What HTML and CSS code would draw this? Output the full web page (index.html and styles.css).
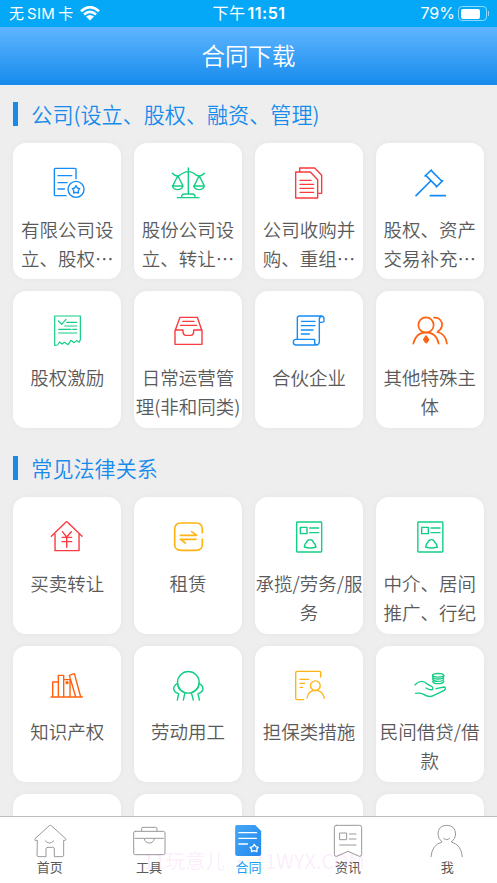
FILE: index.html
```
<!DOCTYPE html>
<html lang="zh-CN">
<head>
<meta charset="utf-8">
<title>合同下载</title>
<link rel="stylesheet" href="styles.css">
</head>
<body>
<div class="app">
  <header class="status">
    <div class="status-left"><span>无<span class="sim">SIM</span>卡</span>
      <svg class="wifi" viewBox="0 0 60 44"><path d="M3 15Q30-9 57 15M12 25Q30 9 48 25" fill="none" stroke="#fff" stroke-width="8"/><path d="M18 31Q30 22 42 31L30 43Z" fill="#fff"/></svg>
    </div>
    <div class="clock">下午<b>11:51</b></div>
    <div class="status-right"><span>79%</span><span class="battery"><i></i></span><span class="nub"></span></div>
  </header>
  <h1 class="title">合同下载</h1>
  <main class="content">
    <h2 class="section">公司(设立、股权、融资、管理)</h2>
    <div class="grid">
      <div class="card"><svg class="icon blue" viewBox="141.9 66 120 120"><path d="M199 167H167Q164 167 164 164V88Q164 85 167 85H226Q229 85 229 88V116M175 107H216M175 128H202M175 147H194"/><circle cx="229" cy="148" r="24"/><path d="M229 137L233 144L240 146L236 151V159L229 157L222 159V151L218 146L225 144Z"/></svg><p>有限公司设<br>立、股权…</p></div>
      <div class="card"><svg class="icon green" viewBox="504 66 120 120"><path d="M565 84V162M517 100Q525 109 534 108Q543 104 550 99Q565 91 580 99Q588 107 597 108Q606 108 613 100M533 108L519 136M534 108L548 136M597 108L583 136M598 108L612 136M517 138H549Q545 149 533 149Q521 149 517 138ZM581 138H613Q609 149 597 149Q585 149 581 138ZM532 173H597M545 172Q544 162 553 162H577Q586 162 585 172"/></svg><p>股份公司设<br>立、转让…</p></div>
      <div class="card"><svg class="icon red" viewBox="126 66 120 120"><path d="M146 96H190L212 119V174H146ZM158 95V84H203L224 106V160H213M159 121H192M159 133H200M159 145H200M159 157H200"/></svg><p>公司收购并<br>购、重组…</p></div>
      <div class="card"><svg class="icon blue thick" viewBox="488 66 120 120"><path d="M506 167L550 123M533 108L552 90M536 107L568 139M552 92L583 123M567 141L586 122M549 167H594"/></svg><p>股权、资产<br>交易补充…</p></div>

      <div class="card"><svg class="icon green thin" viewBox="141.9 61 120 120"><path d="M165 79H242V150L238 158L231 152L223 159L214 152L205 165L194 158L187 163L180 157L173 166L165 167ZM176 94L186 104L199 89M201 98H231M195 109H231M177 119H214M219 119H231M177 130H231"/></svg><p>股权激励</p></div>
      <div class="card"><svg class="icon red" viewBox="504 61 120 120"><path d="M525 121H549V127Q550 137 558 137H573Q580 137 581 127V121H606V164H525ZM526 121L540 83H592L605 121M548 95H582M541 107H590"/></svg><p>日常运营管<br>理(非和同类)</p></div>
      <div class="card"><svg class="icon blue" viewBox="126 61 120 120"><path d="M151 148V85Q151 79 158 79H222Q231 79 231 88V95Q230 98 225 98H218M224 79Q216 82 217 91V157Q216 166 207 166H147Q139 166 139 158Q139 149 147 149H203V157Q203 166 210 166M163 95H204M163 108H204M163 121H198M163 133H187"/></svg><p>合伙企业</p></div>
      <div class="card"><svg class="icon orange" viewBox="488 61 120 120"><g class="thick"><circle cx="536" cy="106" r="23"/><path d="M498 162Q506 128 536 128Q567 128 574 162M560 84Q572 82 579 91Q586 99 584 109Q582 119 570 127Q595 132 599 162"/></g><path class="fill" d="M536 139L544 150L540 156L537 159L533 156L529 150Z"/></svg><p>其他特殊主<br>体</p></div>
    </div>
    <h2 class="section second">常见法律关系</h2>
    <div class="grid">
      <div class="card"><svg class="icon red" viewBox="141.9 200 120 120"><path d="M155 261L199 218Q201 216 203 218L247 261M166 255V304H238V255M188 247L201 263L215 247M187 264H216M187 277H216M201 263V294"/></svg><p>买卖转让</p></div>
      <div class="card"><svg class="icon yellow thick" viewBox="504 200 120 120"><path d="M607 250V240Q607 221 588 221H543Q524 221 524 240V285Q524 303 543 303H588Q607 303 607 285V269M541 258H590L575 247M588 270H541L556 281"/></svg><p>租赁</p></div>
      <div class="card"><svg class="icon green" viewBox="126 80 120 120"><rect x="149" y="98" width="75" height="90" rx="2"/><path d="M160 114H180V133H160ZM188 116H215M188 130H215M172 173Q174 162 178 160Q181 151 189 151Q197 151 200 160Q205 163 207 173Q190 179 172 173Z"/></svg><p>承揽/劳务/服<br>务</p></div>
      <div class="card"><svg class="icon green" viewBox="488 80 120 120"><rect x="511.500" y="98" width="75" height="90" rx="2"/><path d="M523 114H543V133H523ZM551 116H578M551 130H578M535 173Q537 162 541 160Q544 151 552 151Q560 151 563 160Q568 163 570 173Q553 179 535 173Z"/></svg><p>中介、居间<br>推广、行纪</p></div>

      <div class="card"><svg class="icon orange" viewBox="141.9 75 120 120"><path d="M154 171H248M159 171V126H175M176 171V106H192V171M192 119H211V171M228 171L209 106L224 101L243 171"/><circle class="fill" cx="202" cy="128" r="3"/></svg><p>知识产权</p></div>
      <div class="card"><svg class="icon green" viewBox="504 75 120 120"><circle cx="565" cy="127" r="32.500"/><path d="M533 130Q521 137 521 146Q522 157 536 161L532 180M534 139Q537 151 555 158L550 180M597 130Q609 137 609 146Q608 157 594 161L598 180M596 139Q592 151 574 158L580 180"/></svg><p>劳动用工</p></div>
      <div class="card"><svg class="icon yellow" viewBox="126 75 120 120"><path d="M221 111V97Q221 94 218 94H151Q146 94 146 99V174Q146 179 151 179H170M159 118H185M159 130H173M159 142H167M180 174Q184 151 205 151Q227 151 232 174"/><circle cx="205" cy="137" r="14.500"/></svg><p>担保类措施</p></div>
      <div class="card"><svg class="icon green" viewBox="488 75 120 120"><path d="M503 134Q513 124 523 124Q533 124 538 131L547 136Q559 141 556 148Q550 152 536 144M505 160Q519 158 529 163Q546 174 558 167L591 151Q598 142 590 141L566 146"/><ellipse cx="572.500" cy="106" rx="16.500" ry="5.500"/><path d="M556 106V111Q558 117 572 117Q588 117 589 111V106M556 117Q558 124 572 124Q588 124 589 117M556 124Q558 131 572 131Q588 131 589 124"/></svg><p>民间借贷/借<br>款</p></div>

      <div class="card"></div><div class="card"></div><div class="card"></div><div class="card"></div>
    </div>
  </main>
  <nav class="tabs">
    <div class="tab"><svg viewBox="95 111 108 108"><path d="M110 166H104Q102 164 104 161L147 122Q150 120 153 122L196 161Q198 164 195 166H190V211Q190 215 186 215H162V192Q162 187 157 187H143Q137 187 137 192V215H113Q110 215 110 211ZM135 168Q147 181 160 168"/></svg><span>首页</span></div>
    <div class="tab"><svg viewBox="393 111 108 108"><rect x="401" y="139" width="94" height="70" rx="5"/><path d="M425 138V131Q425 127 429 127H467Q471 127 471 131V138M405 160H490M433 162Q435 174 448 174Q460 174 463 162"/></svg><span>工具</span></div>
    <div class="tab active"><svg viewBox="301.500 21 108 108"><defs><linearGradient id="doc" x1="0" y1="0" x2="1" y2="1"><stop offset="0" stop-color="#45a6f5"/><stop offset="1" stop-color="#2189ee"/></linearGradient></defs><path fill="url(#doc)" stroke="none" d="M322 30H377L395 48V117Q395 123 389 123H323Q317 123 317 117V35Q317 30 322 30Z"/><path class="lines" d="M328 53H381M328 70H381M328 87H354M374 88L379 95L386 97L382 102V110L374 107L366 110V102L362 97L370 95Z"/></svg><span>合同</span></div>
    <div class="tab"><svg viewBox="249 111 108 108"><path d="M268 121H338Q344 121 344 127V208Q343 215 337 214L303 199L269 214Q262 215 262 208V127Q262 121 268 121ZM279 144H299V164H279ZM307 147H327M307 162H327M278 180H327"/></svg><span>资讯</span></div>
    <div class="tab"><svg viewBox="547 111 108 108"><path d="M553 215Q556 179 586 171Q574 161 574 147Q575 121 600 121Q625 121 627 147Q627 161 614 171Q644 179 647 215M591 160Q600 169 609 160"/></svg><span>我</span></div>
    <div class="watermark">11玩意儿 · 11WYX.COM</div>
  </nav>
</div>
</body>
</html>
```
FILE: styles.css
```
* { box-sizing: border-box; }
body {
  margin: 0;
  background: #eee;
  color: #5a5a5a;
  font-family: "Noto Sans CJK SC", sans-serif;
  font-weight: 350;
}
h1, h2, p { margin: 0; font-weight: 350; }
.app {
  display: flex;
  flex-direction: column;
  height: 883px;
  overflow: hidden;
}
.status {
  flex: none;
  display: grid;
  grid-template-columns: 1fr auto 1fr;
  align-items: center;
  height: 27px;
  padding: 0 8px 0 9px;
  background: #04a8f7;
  color: #fff;
  font: 400 16px/27px Inter, "Noto Sans CJK SC", sans-serif;
}
.status-left, .status-right { display: flex; align-items: center; }
.status-left { gap: 7px; font-size: 15px; }
.sim { margin: 0 3px; letter-spacing: .3px; }
.wifi { width: 20px; height: 15px; }
.clock { letter-spacing: .5px; }
.clock b { margin-left: 2px; font-weight: 600; }
.status-right { justify-content: flex-end; }
.battery {
  width: 29px;
  height: 15px;
  margin-left: 3px;
  padding: 1.5px;
  border: 1px solid #8ed8fc;
  border-radius: 4px;
}
.battery i {
  display: block;
  width: 19px;
  height: 10px;
  border-radius: 2px;
  background: #fff;
}
.nub {
  width: 1px;
  height: 5px;
  margin-left: 1px;
  background: #8ed8fc;
}
.title {
  flex: none;
  height: 58px;
  background: linear-gradient(#5fb5ff, #168bec);
  color: #fff;
  font-size: 23.5px;
  line-height: 57px;
  text-align: center;
}
.content {
  flex: 1;
  min-height: 0;
  padding: 17px 13px 0 13.3px;
  overflow: hidden;
}
.section {
  display: flex;
  align-items: center;
  height: 24px;
  color: #168bec;
  font-size: 21.1px;
  line-height: 24px;
  white-space: nowrap;
}
.section::before {
  content: "";
  width: 5px;
  height: 24px;
  margin-right: 13px;
  background: #168bec;
}
.section.second { margin-top: 28.700px; }
.grid {
  display: grid;
  grid-template-columns: repeat(4, 108px);
  grid-auto-rows: 136.300px;
  gap: 12px 12.800px;
  margin-top: 17px;
}
.card {
  padding-top: 19px;
  border-radius: 13px;
  background: #fff;
  box-shadow: 0 0 7px rgba(0, 0, 0, .04);
  font-size: 18.5px;
  line-height: 29px;
  text-align: center;
  white-space: nowrap;
}
.icon {
  display: block;
  width: 40px;
  height: 40px;
  margin: 0 auto 12.5px;
  fill: none;
  stroke: currentColor;
  stroke-width: 4.2;
  stroke-linejoin: round;
  stroke-linecap: round;
}
.thin { stroke-width: 3.6; }
.thick { stroke-width: 5; }
.fill { fill: currentColor; }
.blue { color: #168cf5; }
.green { color: #13ce85; }
.red { color: #fa3b3f; }
.orange { color: #ff6110; }
.yellow { color: #ffb414; }
.tabs {
  position: relative;
  flex: none;
  display: grid;
  grid-template-columns: repeat(5, 1fr);
  height: 67px;
  border-top: 1px solid #bcbcbc;
  background: #fff;
}
.tab {
  display: flex;
  flex-direction: column;
  align-items: center;
  padding-top: 5px;
  font-size: 13px;
  font-weight: 400;
  line-height: 17px;
}
.tab svg {
  width: 36px;
  height: 36px;
  fill: none;
  stroke: #999;
  stroke-width: 3;
  stroke-linecap: round;
  stroke-linejoin: round;
}
.tab .lines { stroke: #fff; stroke-width: 4; }
.active { color: #159ff5; }
.watermark {
  position: absolute;
  top: 30px;
  left: 143px;
  color: rgba(235, 75, 235, .11);
  font-size: 20px;
  font-weight: 400;
  line-height: 28px;
  white-space: nowrap;
}
```
